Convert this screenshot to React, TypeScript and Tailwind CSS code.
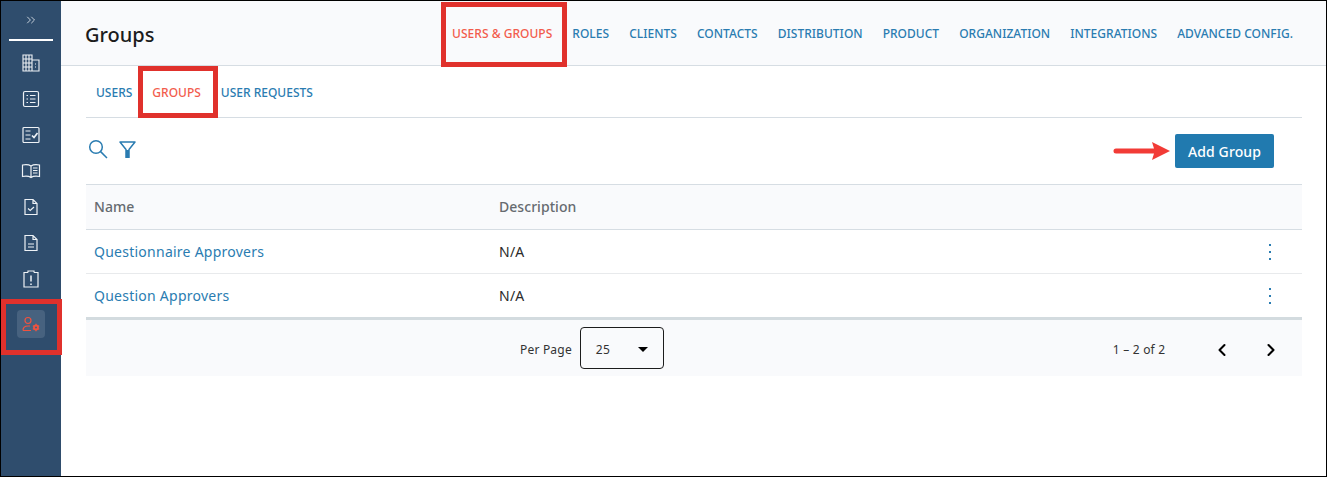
import { ChevronLeft, ChevronRight, ChevronsRight } from "lucide-react";

const navItems = ["ROLES", "CLIENTS", "CONTACTS", "DISTRIBUTION", "PRODUCT", "ORGANIZATION", "INTEGRATIONS", "ADVANCED CONFIG."];

const iconClass = "w-[20px] h-[20px]";

const BuildingIcon = () => (
  <svg viewBox="0 0 20 20" className={iconClass} fill="none" stroke="currentColor" strokeWidth="1.1">
    <path d="M2 2h9v16H2zM11 7h7v11h-7M5 2v16M8 2v16M2 6h9M2 10h9M2 14h9M14 11h1M14 14h1" />
  </svg>
);

const ListIcon = () => (
  <svg viewBox="0 0 20 20" className={iconClass} fill="none" stroke="currentColor" strokeWidth="1.2">
    <rect x="2.5" y="2.5" width="15" height="15" rx="1.5" />
    <path d="M5.500 6.500h1.500M9 6.500h5.500M5.500 10h1.500M9 10h5.500M5.500 13.500h1.500M9 13.500h5.500" />
  </svg>
);

const ChecklistIcon = () => (
  <svg viewBox="0 0 20 20" className={iconClass} fill="none" stroke="currentColor" strokeWidth="1.2">
    <rect x="2" y="2.5" width="16" height="15" rx="1" />
    <path d="M4.500 6h5M4.500 10h5M4.500 14h5" />
    <path d="M11 10.500l2 2 3.500-4.500" strokeWidth="1.7" />
  </svg>
);

const BookIcon = () => (
  <svg viewBox="0 0 20 20" className={iconClass} fill="none" stroke="currentColor" strokeWidth="1.2">
    <path d="M10 5C8 3.600 4.500 3.400 1.500 4v11.500c3-.6 6.500-.4 8.500 1 2-1.400 5.500-1.600 8.500-1V4C15.500 3.400 12 3.600 10 5zM10 5v11.500" />
    <path d="M12 7h4.500M12 9.500h4.500M12 12h4.500" />
  </svg>
);

const FileCheckIcon = () => (
  <svg viewBox="0 0 20 20" className={iconClass} fill="none" stroke="currentColor" strokeWidth="1.2">
    <path d="M4 2.500h8l4 4v11H4zM12 2.500v4h4" />
    <path d="M7 11.500l2.200 2 3.800-3.500" />
  </svg>
);

const FileTextIcon = () => (
  <svg viewBox="0 0 20 20" className={iconClass} fill="none" stroke="currentColor" strokeWidth="1.2">
    <path d="M4 2.500h8l4 4v11H4zM12 2.500v4h4" />
    <path d="M7 11h6M7 14h6" />
  </svg>
);

const ClipboardAlertIcon = () => (
  <svg viewBox="0 0 20 20" className={iconClass} fill="none" stroke="currentColor" strokeWidth="1.2">
    <path d="M7 3.500H3v14.500h14V3.500h-4M7 3.500V2h6v1.500" />
    <path d="M10 6.500v6M10 14.500v1.500" strokeWidth="1.5" />
  </svg>
);

const UserGearIcon = () => (
  <svg viewBox="0 0 20 20" className={iconClass} fill="none" stroke="currentColor" strokeWidth="1.2">
    <circle cx="7" cy="6.500" r="3" />
    <path d="M2 16.500c0-3 2-4.500 5-4.500h2M2 16.500h8" />
    <circle cx="15" cy="13.500" r="2" strokeWidth="1.800" />
    <path d="M15 9.800v1.700M15 15.500v1.700M11.800 11.700l1.500.8M16.700 14.500l1.500.8M11.800 15.300l1.500-.8M16.700 12.500l1.500-.8" strokeWidth="1.300" />
  </svg>
);

const SearchIcon = () => (
  <svg viewBox="0 0 20 20" className="w-[20px] h-[20px] text-[#2a7cb1]" fill="none" stroke="currentColor" strokeWidth="1.500">
    <circle cx="8" cy="8" r="6.300" />
    <path d="M12.600 12.600L19 19" />
  </svg>
);

const FunnelIcon = () => (
  <svg viewBox="0 0 17 17" className="w-[17px] h-[17px] text-[#2a7cb1]" fill="none" stroke="currentColor" strokeWidth="1.500">
    <path d="M1 1h15l-6 7.500v8H7v-8z" strokeLinejoin="round" />
    <path d="M7 9h3v8H7z" fill="currentColor" stroke="none" />
  </svg>
);

const KebabIcon = () => (
  <svg viewBox="0 0 4 18" className="w-[4px] h-[18px] mr-[30px] text-[#2a7cb1]" fill="currentColor">
    <rect x="1" y="1" width="2" height="2" />
    <rect x="1" y="8" width="2" height="2" />
    <rect x="1" y="15" width="2" height="2" />
  </svg>
);

const sideIcons = [BuildingIcon, ListIcon, ChecklistIcon, BookIcon, FileCheckIcon, FileTextIcon, ClipboardAlertIcon];

function Sidebar() {
  return (
    <aside className="w-[60px] shrink-0 bg-[#2f4d6d] flex flex-col items-center text-[#eef2f6]">
      <div className="h-[40px] w-[44px] flex items-center justify-center border-b-2 border-white shrink-0">
        <ChevronsRight className="w-[14px] h-[14px] text-[#e6ebf0]" strokeWidth={1.4} />
      </div>
      <div className="mt-[4px] flex flex-col items-center">
        {sideIcons.map((Icon, i) => (
          <div key={i} className="h-[36px] flex items-center justify-center">
            <Icon />
          </div>
        ))}
      </div>
      <div className="mt-[13px] w-[28px] h-[28px] rounded-[4px] bg-[#47627f] flex items-center justify-center text-[#f0533f]">
        <UserGearIcon />
      </div>
    </aside>
  );
}

function RedBox({ className }: { className: string }) {
  return <div className={`absolute border-[5px] border-[#e0312c] pointer-events-none ${className}`} />;
}

function Row({ name }: { name: string }) {
  return (
    <div className="h-[44px] flex items-center border-b border-[#e8eaec] text-[14px] tracking-[0.25px]">
      <div className="w-[413px] pl-[8px] text-[#2a7cb1]">{name}</div>
      <div className="flex-1 text-[#2b2b2b]">N/A</div>
      <KebabIcon />
    </div>
  );
}

export default function App() {
  return (
    <div
      className="relative w-[1327px] h-[477px] overflow-hidden bg-white border border-black flex"
      style={{ fontFamily: '"Noto Sans", sans-serif' }}
    >
      <Sidebar />
      <main className="flex-1 min-w-0 flex flex-col">
        <header className="h-[65px] shrink-0 bg-[#f9fafc] border-b border-[#d6dde3] flex items-center pl-[24px]">
          <h1 className="pt-[4px] text-[20px] font-medium text-[#1c1c1c]">Groups</h1>
          <nav className="ml-auto mr-[33px] pt-[2px] flex items-center gap-[20px] text-[12px] font-medium tracking-[0.025px] text-[#2a7cb1]">
            <span className="text-[#f25c4d]">USERS &amp; GROUPS</span>
            {navItems.map((item) => (
              <span key={item}>{item}</span>
            ))}
          </nav>
        </header>
        <div className="mx-[25px] w-[1216px]">
          <div className="h-[52px] pt-[2px] border-b border-[#d6dde3] flex items-center gap-[20px] pl-[10px] text-[12px] font-medium text-[#2a7cb1]">
            <span>USERS</span>
            <span className="text-[#f25c4d]">GROUPS</span>
            <span>USER REQUESTS</span>
          </div>
          <div className="h-[66px] flex items-center">
            <div className="ml-[2px] -mt-[4px] flex items-center gap-[11px]">
              <SearchIcon />
              <FunnelIcon />
            </div>
            <button className="ml-auto mr-[28px] w-[99px] h-[34px] rounded-[2px] bg-[#217aaf] text-white text-[14px] font-medium tracking-[0.1px]">
              Add Group
            </button>
          </div>
          <div className="h-[46px] pb-[2px] bg-[#f9fafc] border-y border-[#d6dde3] flex items-center text-[14px] font-medium tracking-[0.05px] text-[#666b70]">
            <div className="w-[413px] pl-[8px]">Name</div>
            <div>Description</div>
          </div>
          <Row name="Questionnaire Approvers" />
          <Row name="Question Approvers" />
          <div className="h-[59px] -mt-px border-t-[3px] border-[#d3dbdf] bg-[#f9fafc] flex items-center text-[12px] tracking-[0.2px] text-[#333]">
            <span className="ml-[434px] mt-[3px]">Per Page</span>
            <div className="ml-[8px] w-[84px] h-[42px] pt-[3px] border border-[#1c1c1c] rounded-[4px] flex items-center justify-between pl-[15px] pr-[15px]">
              <span>25</span>
              <span className="w-0 h-0 border-x-[5px] border-x-transparent border-t-[5px] border-t-black" />
            </div>
            <span className="ml-[449px] mt-[3px]">1 – 2 of 2</span>
            <ChevronLeft className="ml-[47px] mt-[3px] w-[20px] h-[20px] text-black" strokeWidth={2.5} />
            <ChevronRight className="ml-[29px] mt-[3px] w-[20px] h-[20px] text-black" strokeWidth={2.5} />
          </div>
        </div>
      </main>

      {/* Annotations drawn over the page */}
      <RedBox className="left-[440px] top-[1px] w-[126px] h-[65px]" />
      <RedBox className="left-[137px] top-[65px] w-[80px] h-[52px]" />
      <RedBox className="left-0 top-[298px] w-[61px] h-[56px]" />
      <svg className="absolute left-[1112px] top-[140px] w-[58px] h-[20px]" viewBox="0 0 58 20">
        <path d="M3 7.500h38L39 1l18 9-18 9 2-6.500H3a2.500 2.500 0 0 1 0-5z" fill="#f23b36" />
      </svg>
    </div>
  );
}
